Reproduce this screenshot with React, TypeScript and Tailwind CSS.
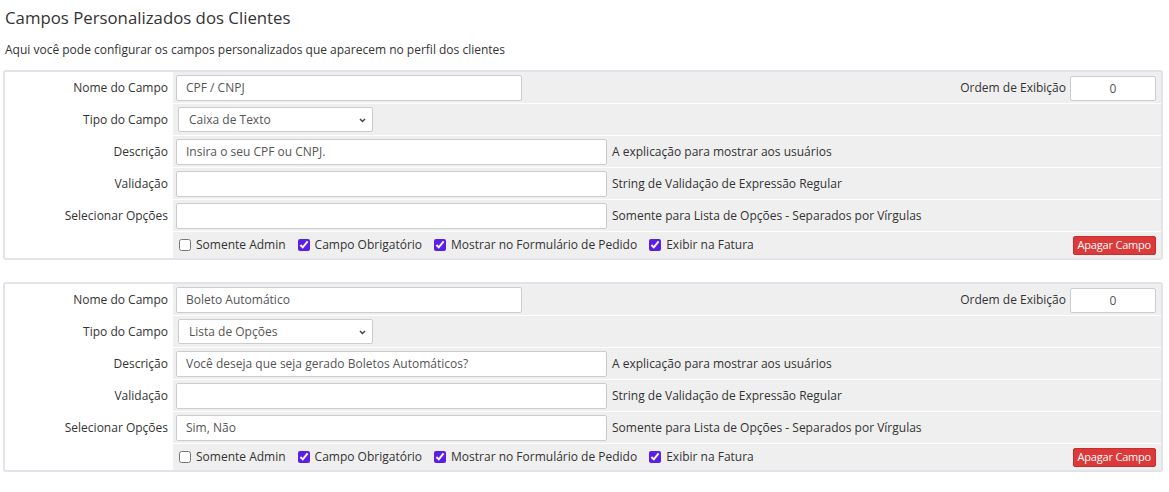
import React from "react";

type Field = {
  name: string;
  type: string;
  description: string;
  validation: string;
  options: string;
  order: string;
};

const fields: Field[] = [
  {
    name: "CPF / CNPJ",
    type: "Caixa de Texto",
    description: "Insira o seu CPF ou CNPJ.",
    validation: "",
    options: "",
    order: "0",
  },
  {
    name: "Boleto Automático",
    type: "Lista de Opções",
    description: "Você deseja que seja gerado Boletos Automáticos?",
    validation: "",
    options: "Sim, Não",
    order: "0",
  },
];

const Row = ({
  label,
  children,
  tall = true,
}: {
  label?: string;
  children: React.ReactNode;
  tall?: boolean;
}) => (
  <div className={`flex ${tall ? "h-[32px] border-b border-white" : "h-[26px]"}`}>
    <div className="w-[168px] shrink-0 bg-white pr-[5px] flex items-center justify-end text-[#333]">
      {label}
    </div>
    <div className="flex-1 bg-[#efefef] flex items-center pl-[3px] pr-[5px]">{children}</div>
  </div>
);

const TextInput = ({ value, width }: { value: string; width: string }) => (
  <input
    readOnly
    value={value}
    className={`${width} h-[26px] bg-white border border-[#cccccc] rounded-[2px] px-[9px] text-[12px] text-[#555] outline-none`}
  />
);

const Check = ({ label, checked }: { label: string; checked: boolean }) => (
  <label className="flex items-center mr-[12px]">
    <input
      type="checkbox"
      readOnly
      checked={checked}
      className="w-[12px] h-[12px] m-0 mr-[5px] accent-[#5b1ee6]"
    />
    <span className="text-[#333]">{label}</span>
  </label>
);

const FieldPanel = ({ f }: { f: Field }) => (
  <div className="border-2 border-[#e0e3e7] rounded-[3px] mb-[22px]">
    <Row label="Nome do Campo">
      <TextInput value={f.name} width="w-[346px]" />
      <div className="ml-auto flex items-center">
        <span className="text-[#333] mr-[4px]">Ordem de Exibição</span>
        <input
          readOnly
          value={f.order}
          className="w-[86px] h-[25px] mt-[2px] bg-white border border-[#cccccc] rounded-[2px] text-center text-[12px] text-[#555] outline-none"
        />
      </div>
    </Row>
    <Row label="Tipo do Campo">
      <div className="relative ml-[2px] w-[195px] h-[25px] bg-white border border-[#cccccc] rounded-[2px] flex items-center pl-[10px] text-[#555]">
        {f.type}
        <svg className="absolute right-[6px] top-[10px]" width="7" height="5" viewBox="0 0 7 5">
          <path d="M1 1 L3.5 3.5 L6 1" fill="none" stroke="#444" strokeWidth="1.5" />
        </svg>
      </div>
    </Row>
    <Row label="Descrição">
      <TextInput value={f.description} width="w-[431px]" />
      <span className="ml-[5px] text-[#333]">A explicação para mostrar aos usuários</span>
    </Row>
    <Row label="Validação">
      <TextInput value={f.validation} width="w-[431px]" />
      <span className="ml-[5px] text-[#333]">String de Validação de Expressão Regular</span>
    </Row>
    <Row label="Selecionar Opções">
      <TextInput value={f.options} width="w-[431px]" />
      <span className="ml-[5px] text-[#333]">Somente para Lista de Opções - Separados por Vírgulas</span>
    </Row>
    <Row tall={false}>
      <div className="flex items-center pl-[3px]">
        <Check label="Somente Admin" checked={false} />
        <Check label="Campo Obrigatório" checked />
        <Check label="Mostrar no Formulário de Pedido" checked />
        <Check label="Exibir na Fatura" checked />
      </div>
      <button className="ml-auto h-[19px] px-[4px] bg-[#dc3a3a] border border-[#c92e2e] rounded-[2px] text-white text-[11px] leading-[16px] tracking-[-0.2px]">
        Apagar Campo
      </button>
    </Row>
  </div>
);

export default function App() {
  return (
    <div
      className="bg-white w-[1169px] min-h-[492px] px-[3px] pt-[6px] text-[12px] text-[#333]"
      style={{ fontFamily: '"Open Sans", "Liberation Sans", sans-serif' }}
    >
      <h1 className="text-[16.8px] leading-[24px] ml-[2px] text-[#333]">
        Campos Personalizados dos Clientes
      </h1>
      <p className="mt-[11px] leading-[18px] ml-[2px]">
        Aqui você pode configurar os campos personalizados que aparecem no perfil dos clientes
      </p>
      <div className="mt-[11px] w-[1160px]">
        {fields.map((f) => (
          <FieldPanel key={f.name} f={f} />
        ))}
      </div>
    </div>
  );
}
